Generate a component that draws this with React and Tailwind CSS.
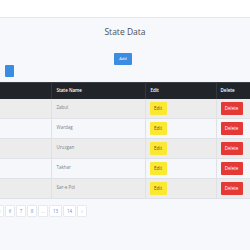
const rows = ['Zabul', 'Wardag', 'Uruzgan', 'Takhar', 'Sar-e Pol']
const pages = ['5', '6', '7', '8', '…', '13', '14', '›']

export default function App() {
  return (
    <div className="w-[250px] h-[250px] overflow-hidden bg-[#f7f8fb] font-['Open_Sans',sans-serif]">
      <header className="h-[18px] bg-white border-b border-[#e4e7eb]" />

      <h1 className="mt-[7px] text-center text-[8.5px] leading-[14px] text-[#4a4f55]">State Data</h1>

      <div className="mt-[14px] flex justify-center pr-[4px]">
        <button className="w-[18px] h-[12px] rounded-[1px] bg-[#3a8de0] text-white text-[4px] leading-[12px]">Add</button>
      </div>

      <div className="ml-[5px] w-[9px] h-[12px] rounded-[1px] bg-[#3a8de0]" />

      <table className="mt-[5px] w-[250px] table-fixed border-collapse text-[4.5px]">
        <colgroup>
          <col className="w-[51px]" />
          <col className="w-[94px]" />
          <col className="w-[71px]" />
          <col className="w-[34px]" />
        </colgroup>
        <thead>
          <tr className="h-[16px] bg-[#212529] text-white border-t border-[#3b4046]">
            <th className="text-left font-semibold px-[5px]"></th>
            <th className="text-left font-semibold px-[5px] border-l border-[#32383e]">State Name</th>
            <th className="text-left font-semibold px-[5px] border-l border-[#32383e]">Edit</th>
            <th className="text-left font-semibold px-[4px] border-l border-[#32383e]">Delete</th>
          </tr>
        </thead>
        <tbody>
          {rows.map((name, i) => (
            <tr key={name} className={`h-[20px] border-b border-[#dee2e6] ${i % 2 === 0 ? 'bg-[#ececec]' : 'bg-[#f6f7fb]'}`}>
              <td className="px-[5px]"></td>
              <td className="px-[5px] text-[#7a7f85] border-l border-[#dee2e6] align-top pt-[5px]">{name}</td>
              <td className="px-[4px] border-l border-[#dee2e6]">
                <span className="flex items-center justify-center w-[17px] h-[13px] rounded-[1px] bg-[#fbe833] text-[#5a5420] text-[4.5px]">Edit</span>
              </td>
              <td className="px-[4px] border-l border-[#dee2e6]">
                <span className="flex items-center justify-center w-[22px] h-[13px] rounded-[1px] bg-[#e53935] text-white text-[4.5px]">Delete</span>
              </td>
            </tr>
          ))}
        </tbody>
      </table>

      <nav className="mt-[6px] ml-[-6px] flex gap-[1px]">
        {pages.map((p) => (
          <span
            key={p}
            className={`flex items-center justify-center h-[12px] bg-white border border-[#e6e9ee] rounded-[1px] text-[4.5px] ${p === '…' ? 'text-[#b5bac0]' : 'text-[#5b95e0]'} ${p.length > 1 ? 'w-[13px]' : 'w-[10px]'} ${p === '›' ? 'w-[9px]' : ''}`}
          >
            {p}
          </span>
        ))}
      </nav>
    </div>
  )
}
